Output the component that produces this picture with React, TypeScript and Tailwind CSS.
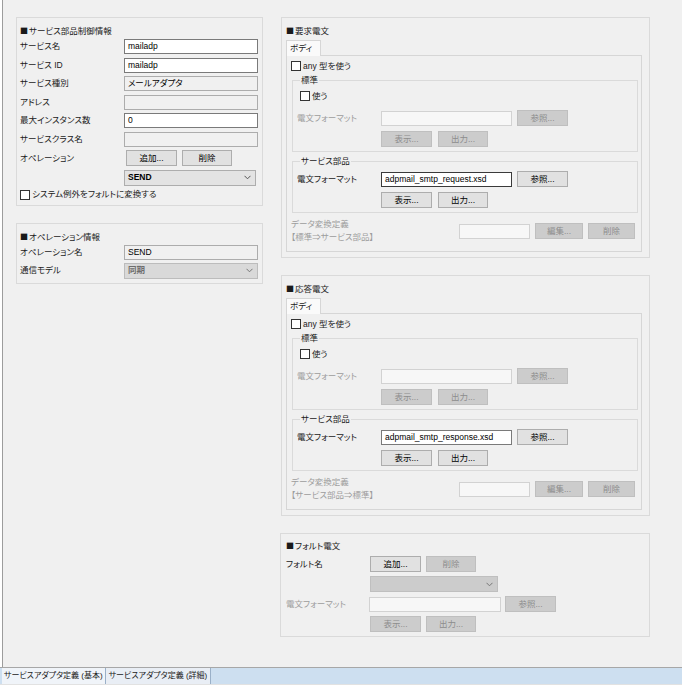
import React from "react";

const FONT = { fontFamily: '"Liberation Sans", "Noto Sans CJK JP", sans-serif' };

type BoxProps = { value?: string; w: string; variant?: "white" | "ro" | "off" | "focus" };

const TextBox: React.FC<BoxProps> = ({ value = "", w, variant = "white" }) => {
  const cls =
    variant === "white"
      ? "bg-white border-[#7a7a7a] text-black"
      : variant === "focus"
      ? "bg-white border-[#3a3a3a] text-black"
      : variant === "ro"
      ? "bg-[#f0f0f0] border-[#acacac] text-black"
      : "bg-[#f7f7f7] border-[#d2d2d2] text-[#8a8a8a]";
  return (
    <div className={`${w} h-[15px] border ${cls} flex items-center pl-[3px] leading-none`}>
      {value}
    </div>
  );
};

const Btn: React.FC<{ label: string; off?: boolean; w?: string }> = ({ label, off, w = "w-[51px]" }) => (
  <div
    className={`${w} h-[16px] border flex items-center justify-center leading-none ${
      off ? "bg-[#cccccc] border-[#bfbfbf] text-[#8d8d8d]" : "bg-[#e1e1e1] border-[#adadad] text-black"
    }`}
  >
    {label}
  </div>
);

const Chevron: React.FC<{ c?: string }> = ({ c = "#555" }) => (
  <svg width="7" height="5" viewBox="0 0 7 5" className="mr-[4px]">
    <polyline points="0.5,0.8 3.5,3.8 6.5,0.8" fill="none" stroke={c} strokeWidth="1" />
  </svg>
);

const Select: React.FC<{ value?: string; w: string; variant?: "on" | "grey" | "off" }> = ({
  value = "",
  w,
  variant = "on",
}) => {
  const cls =
    variant === "on"
      ? "bg-[#e3e3e3] border-[#adadad] text-black"
      : variant === "grey"
      ? "bg-[#d9d9d9] border-[#bcbcbc] text-[#6d6d6d]"
      : "bg-[#cccccc] border-[#bfbfbf] text-[#8d8d8d]";
  return (
    <div className={`${w} h-[16px] border ${cls} flex items-center justify-between pl-[3px] leading-none font-bold`}>
      <span>{value}</span>
      <Chevron c={variant === "on" ? "#555" : "#777"} />
    </div>
  );
};

const Check: React.FC<{ label: string }> = ({ label }) => (
  <div className="flex items-center h-[12px] leading-none">
    <div className="w-[10px] h-[10px] border border-[#333] bg-white mr-[2px]" />
    <span>{label}</span>
  </div>
);

// section heading with a full-width black square
const Heading: React.FC<{ text: string }> = ({ text }) => (
  <div className="leading-[12px] flex items-center">
    <span className="[font-family:'Noto_Sans_CJK_JP',sans-serif] text-[8px] mr-[1px]">■</span>
    {text}
  </div>
);

const Row: React.FC<{ label: string; children: React.ReactNode; lw?: string; dim?: boolean }> = ({
  label,
  children,
  lw = "w-[104px]",
  dim,
}) => (
  <div className="flex items-center">
    <div className={`${lw} shrink-0 leading-none ${dim ? "text-[#9d9d9d]" : ""}`}>{label}</div>
    {children}
  </div>
);

const Group: React.FC<{ title: string; className?: string; children: React.ReactNode }> = ({
  title,
  className = "",
  children,
}) => (
  <fieldset className={`border border-[#dadada] ml-[5px] mr-[3px] pl-[4px] pr-[2px] ${className}`}>
    <legend className="ml-[3px] px-[1px] leading-[12px]">{title}</legend>
    {children}
  </fieldset>
);

const MessagePanel: React.FC<{ title: string; file: string; focus?: boolean; conv: [string, string] }> = ({
  title,
  file,
  focus,
  conv,
}) => (
  <div className="border border-[#dadada] pl-[4px] pr-[7px] pt-[7px] pb-[5px]">
    <Heading text={title} />
    <div className="mt-[3px] relative z-10 -mb-px w-[35px] h-[16px] border border-b-0 border-[#d6d6d6] bg-[#fafafa] flex items-center pl-[3px] leading-none">
      ボディ
    </div>
    <div className="border border-[#d6d6d6] h-[197px] pt-[4px]">
      <div className="pl-[4px]">
        <Check label="any 型を使う" />
      </div>
      <Group title="標準" className="mt-[2px] pb-[4px]">
        <div className="pl-[3px] mt-[4px]">
          <Check label="使う" />
        </div>
        <div className="mt-[8px]">
          <Row label="電文フォーマット" lw="w-[84px]" dim>
            <TextBox w="w-[131px]" variant="off" />
            <div className="ml-[5px]">
              <Btn label="参照..." off />
            </div>
          </Row>
        </div>
        <div className="flex gap-[6px] ml-[84px] mt-[5px]">
          <Btn label="表示..." off />
          <Btn label="出力..." off w="w-[50px]" />
        </div>
      </Group>
      <Group title="サービス部品" className="mt-[3px] pb-[4px]">
        <div className="mt-[4px]">
          <Row label="電文フォーマット" lw="w-[84px]">
            <TextBox w="w-[131px]" value={file} variant={focus ? "focus" : "white"} />
            <div className="ml-[5px]">
              <Btn label="参照..." />
            </div>
          </Row>
        </div>
        <div className="flex gap-[6px] ml-[84px] mt-[5px]">
          <Btn label="表示..." />
          <Btn label="出力..." w="w-[50px]" />
        </div>
      </Group>
      <div className="flex items-center pl-[4px] mt-[5px] text-[#9d9d9d]">
        <div className="w-[168px] leading-[13px]">
          <div>{conv[0]}</div>
          <div>{conv[1]}</div>
        </div>
        <TextBox w="w-[71px]" variant="off" />
        <div className="ml-[5px]">
          <Btn label="編集..." off w="w-[48px]" />
        </div>
        <div className="ml-[5px]">
          <Btn label="削除" off w="w-[47px]" />
        </div>
      </div>
    </div>
  </div>
);

export default function App() {
  return (
    <div
      className="w-[685px] h-[688px] bg-white flex flex-col text-[8.5px] text-[#1a1a1a] [font-feature-settings:'palt']"
      style={FONT}
    >
      <div className="ml-[2px] w-[680px] h-[667px] bg-[#f0f0f0] border-l border-[#9c9c9c] pl-[13px] pt-[17px] flex gap-[18px]">
        {/* left column */}
        <div className="w-[247px] flex flex-col gap-[17px]">
          <div className="border border-[#dadada] pl-[3px] pr-[4px] pt-[7px] pb-[4px]">
            <Heading text="サービス部品制御情報" />
            <div className="flex flex-col gap-[3.5px] mt-[2px]">
              <Row label="サービス名">
                <TextBox w="w-[134px]" value="mailadp" />
              </Row>
              <Row label="サービス ID">
                <TextBox w="w-[134px]" value="mailadp" />
              </Row>
              <Row label="サービス種別">
                <TextBox w="w-[134px]" value="メールアダプタ" variant="ro" />
              </Row>
              <Row label="アドレス">
                <TextBox w="w-[134px]" variant="ro" />
              </Row>
              <Row label="最大インスタンス数">
                <TextBox w="w-[134px]" value="0" />
              </Row>
              <Row label="サービスクラス名">
                <TextBox w="w-[134px]" variant="ro" />
              </Row>
              <Row label="オペレーション">
                <div className="flex gap-[5px] ml-[2px]">
                  <Btn label="追加..." />
                  <Btn label="削除" w="w-[50px]" />
                </div>
              </Row>
              <div className="ml-[104px]">
                <Select w="w-[132px]" value="SEND" />
              </div>
            </div>
            <div className="mt-[3px]">
              <Check label="システム例外をフォルトに変換する" />
            </div>
          </div>

          <div className="border border-[#dadada] pl-[3px] pr-[4px] pt-[7px] pb-[4px]">
            <Heading text="オペレーション情報" />
            <div className="flex flex-col gap-[3px] mt-[2px]">
              <Row label="オペレーション名">
                <TextBox w="w-[134px]" value="SEND" variant="ro" />
              </Row>
              <Row label="通信モデル">
                <Select w="w-[134px]" value="同期" variant="grey" />
              </Row>
            </div>
          </div>
        </div>

        {/* right column */}
        <div className="w-[369px] flex flex-col">
          <MessagePanel
            title="要求電文"
            file="adpmail_smtp_request.xsd"
            focus
            conv={["データ変換定義", "【標準⇒サービス部品】"]}
          />
          <div className="mt-[17px]">
            <MessagePanel
              title="応答電文"
              file="adpmail_smtp_response.xsd"
              conv={["データ変換定義", "【サービス部品⇒標準】"]}
            />
          </div>
          <div className="mt-[17px] -ml-px border border-[#dadada] pl-[5px] pr-[7px] pt-[6px] pb-[4px]">
            <Heading text="フォルト電文" />
            <div className="flex flex-col gap-[4px] mt-[4px]">
              <Row label="フォルト名" lw="w-[84px]">
                <div className="flex gap-[5px]">
                  <Btn label="追加..." />
                  <Btn label="削除" off w="w-[50px]" />
                </div>
              </Row>
              <div className="ml-[84px]">
                <Select w="w-[128px]" variant="off" />
              </div>
              <Row label="電文フォーマット" lw="w-[83px]" dim>
                <TextBox w="w-[132px]" variant="off" />
                <div className="ml-[4px]">
                  <Btn label="参照..." off />
                </div>
              </Row>
              <div className="flex gap-[5px] ml-[84px]">
                <Btn label="表示..." off />
                <Btn label="出力..." off w="w-[50px]" />
              </div>
            </div>
          </div>
        </div>
      </div>
      <div className="w-[682px] border-t border-[#a7a7a7] h-[17px] bg-[#cddff0] flex items-stretch pl-[2px] text-[8px]">
        <div className="bg-[#f0f4f9] border-r border-[#9ab0c8] px-[2px] flex items-center leading-none">
          サービスアダプタ定義 (基本)
        </div>
        <div className="bg-[#e9eef5] border-r border-[#9ab0c8] px-[3px] flex items-center leading-none">
          サービスアダプタ定義 (詳細)
        </div>
      </div>
      <div className="w-[682px] border-t border-[#e2e2e2]" />
    </div>
  );
}
